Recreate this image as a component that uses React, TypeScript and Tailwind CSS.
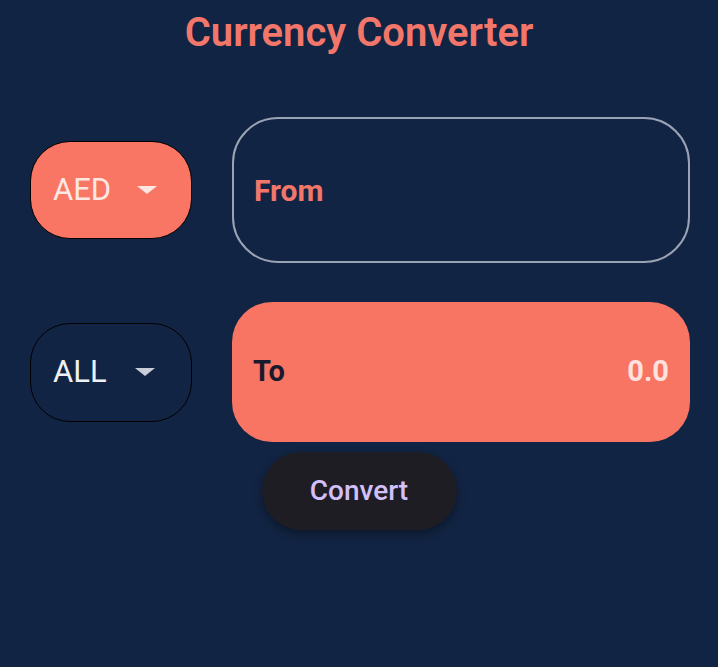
export default function App() {
  return (
    <div
      className="w-[718px] h-[667px] bg-[#122443] flex flex-col"
      style={{ fontFamily: "Roboto, 'Liberation Sans', sans-serif" }}
    >
      <h1 className="mt-[11px] h-[44px] flex items-center justify-center text-[40px] font-semibold text-[#f2776a] leading-none">
        Currency Converter
      </h1>

      <div className="mt-[62px] flex items-center pl-[30px] pr-[28px] gap-[40px]">
        <div className="w-[162px] h-[98px] rounded-[40px] bg-[#f97564] border-[1.5px] border-black flex items-center pl-[22px]">
          <span className="text-[31px] text-[#fde7e3]">AED</span>
          <span className="ml-[26px] w-0 h-0 border-l-[10px] border-r-[10px] border-t-[8px] border-l-transparent border-r-transparent border-t-[#fde7e3]" />
        </div>
        <div className="flex-1 h-[146px] rounded-[46px] border-2 border-[#9aa3b4] flex items-center pl-[20px]">
          <span className="text-[30px] font-bold text-[#f2776a]">From</span>
        </div>
      </div>

      <div className="mt-[39px] flex items-center pl-[30px] pr-[28px] gap-[40px]">
        <div className="w-[162px] h-[99px] rounded-[40px] border-[1.5px] border-black flex items-center pl-[22px]">
          <span className="text-[31px] text-[#eef0f6]">ALL</span>
          <span className="ml-[28px] w-0 h-0 border-l-[10px] border-r-[10px] border-t-[8px] border-l-transparent border-r-transparent border-t-[#c9cdd8]" />
        </div>
        <div className="flex-1 h-[140px] rounded-[40px] bg-[#f87463] flex items-center justify-between pl-[21px] pr-[21px]">
          <span className="text-[29px] font-bold text-[#1a1a2e]">To</span>
          <span className="text-[29px] font-bold text-[#fde2de]">0.0</span>
        </div>
      </div>

      <div className="mt-[10px] flex justify-center">
        <button className="w-[195px] h-[78px] rounded-full bg-[#1f1d24] shadow-[0_4px_8px_rgba(0,0,0,0.35)] text-[28px] font-medium text-[#d2c0fb]">
          Convert
        </button>
      </div>
    </div>
  );
}
